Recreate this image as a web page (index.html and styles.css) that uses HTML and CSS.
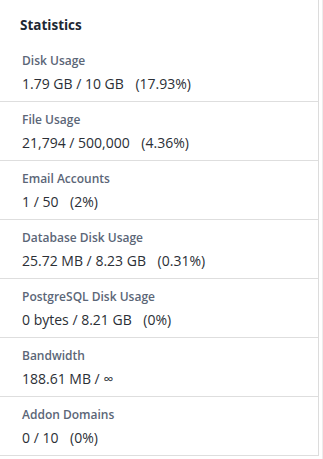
FILE: index.html
```html
<!DOCTYPE html>
<html lang="en">
<head>
    <meta charset="UTF-8">
    <meta name="viewport" content="width=device-width, initial-scale=1.0">
    <title>Statistics</title>
    <link rel="stylesheet" href="styles.css">
</head>
<body>

    <div class="page">
        <div class="stats-panel">
            <h2 class="stats-title">Statistics</h2>

            <!-- One row for each usage value -->
            <div class="stat-row">
                <div class="stat-label">Disk Usage</div>
                <div class="stat-value">1.79 GB / 10 GB <span class="stat-percent">(17.93%)</span></div>
            </div>
            <div class="stat-row">
                <div class="stat-label">File Usage</div>
                <div class="stat-value">21,794 / 500,000 <span class="stat-percent">(4.36%)</span></div>
            </div>
            <div class="stat-row">
                <div class="stat-label">Email Accounts</div>
                <div class="stat-value">1 / 50 <span class="stat-percent">(2%)</span></div>
            </div>
            <div class="stat-row">
                <div class="stat-label">Database Disk Usage</div>
                <div class="stat-value">25.72 MB / 8.23 GB <span class="stat-percent">(0.31%)</span></div>
            </div>
            <div class="stat-row">
                <div class="stat-label">PostgreSQL Disk Usage</div>
                <div class="stat-value">0 bytes / 8.21 GB <span class="stat-percent">(0%)</span></div>
            </div>
            <div class="stat-row">
                <div class="stat-label">Bandwidth</div>
                <div class="stat-value">188.61 MB / ∞</div>
            </div>
            <div class="stat-row">
                <div class="stat-label">Addon Domains</div>
                <div class="stat-value">0 / 10 <span class="stat-percent">(0%)</span></div>
            </div>
        </div>
    </div>

</body>
</html>
```

FILE: styles.css
```css
body {
    margin: 0;
    font-family: "Open Sans", Arial, sans-serif;
    background-color: #fff;
}
.page {
    min-height: 100vh;
    border-right: 1px solid #ececec;
}
.stats-panel {
    width: 318px;
    border-right: 1px solid #dcdcdc;
}
.stats-title {
    margin: 0;
    padding: 16px 20px 9px;
    font-size: 13.5px;
    font-weight: 700;
    line-height: 18px;
    color: #1d2733;
}
.stat-row {
    box-sizing: border-box;
    height: 59px;
    padding: 9px 22px 0;
    border-bottom: 1px solid #dedede;
}
.stat-label {
    font-size: 12px;
    font-weight: 600;
    line-height: 18px;
    color: #5b6677;
}
.stat-value {
    margin-top: 5px;
    font-size: 14px;
    line-height: 18px;
    color: #2b2f36;
}
.stat-percent {
    margin-left: 8px;
}
```
